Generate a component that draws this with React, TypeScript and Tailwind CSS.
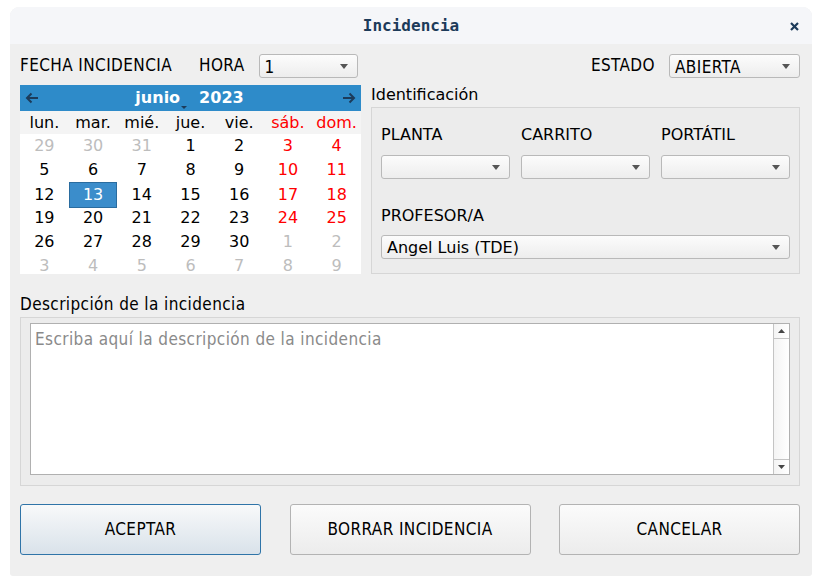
import type { ReactNode } from 'react';

const cond = "font-['DejaVu_Sans_Condensed','DejaVu_Sans',sans-serif] [font-stretch:condensed] text-[17px] tracking-[0.4px]";
const sans = "font-['DejaVu_Sans',sans-serif] text-[16px]";

function Arrow() {
  return (
    <svg width="8" height="5" viewBox="0 0 8 5" className="shrink-0">
      <path d="M0 0h8L4 5z" fill="#555" />
    </svg>
  );
}

function Select({ value, className = '', fontCls = sans }: { value?: string; className?: string; fontCls?: string }) {
  return (
    <div
      className={`flex items-center justify-between h-[24px] pl-[5px] pr-[9px] rounded-[3px] border border-[#b9b9b9] bg-linear-to-b from-[#fcfcfc] to-[#ededed] text-black ${fontCls} ${className}`}
    >
      <span className="leading-none pt-[2px]">{value}</span>
      <Arrow />
    </div>
  );
}

type Day = { n: number; c: 'gray' | 'black' | 'red' | 'sel' };

const weeks: Day[][] = [
  [29, 30, 31, 1, 2, 3, 4],
  [5, 6, 7, 8, 9, 10, 11],
  [12, 13, 14, 15, 16, 17, 18],
  [19, 20, 21, 22, 23, 24, 25],
  [26, 27, 28, 29, 30, 1, 2],
  [3, 4, 5, 6, 7, 8, 9],
].map((w, wi) =>
  w.map((n, di) => {
    const out = (wi === 0 && n > 20) || (wi >= 4 && n < 20);
    if (out) return { n, c: 'gray' as const };
    if (n === 13) return { n, c: 'sel' as const };
    if (di >= 5) return { n, c: 'red' as const };
    return { n, c: 'black' as const };
  })
);

function Calendar() {
  const names = ['lun.', 'mar.', 'mié.', 'jue.', 'vie.', 'sáb.', 'dom.'];
  return (
    <div className={`w-[341px] shrink-0 self-start mt-[1px] bg-white ${sans}`}>
      <div className="h-[26px] bg-[#2e8bc9] flex items-center justify-between px-[5px]">
        <svg width="14" height="12" viewBox="0 0 14 12">
          <path d="M13 6H2M6.5 1.5L2 6l4.5 4.5" stroke="#1c3b5a" strokeWidth="2" fill="none" />
        </svg>
        <div className="flex items-end gap-[19px] text-white font-bold text-[16px] mr-[2px]">
          <span className="relative">
            junio
            <span className="absolute right-[-7px] bottom-[1px] block w-0 h-0 border-l-[3px] border-r-[3px] border-t-[3px] border-l-transparent border-r-transparent border-t-[#1c3b5a]" />
          </span>
          <span>2023</span>
        </div>
        <svg width="14" height="12" viewBox="0 0 14 12">
          <path d="M1 6h11M7.5 1.5L12 6l-4.5 4.5" stroke="#1c3b5a" strokeWidth="2" fill="none" />
        </svg>
      </div>
      <div className="grid grid-cols-7 h-[23px] bg-[#f4f4f4] items-center">
        {names.map((d, i) => (
          <div key={d} className={`text-center ${i >= 5 ? 'text-[#ff0000]' : 'text-black'}`}>
            {d}
          </div>
        ))}
      </div>
      <div>
        {weeks.map((w, wi) => (
          <div key={wi} className={`grid grid-cols-7 items-center ${wi === 5 ? 'h-[20px]' : 'h-[24px]'}`}>
            {w.map((d, di) => (
              <div
                key={di}
                className={`text-center h-full flex items-center justify-center ${
                  d.c === 'gray'
                    ? 'text-[#bdbdbd]'
                    : d.c === 'red'
                    ? 'text-[#ff0000]'
                    : d.c === 'sel'
                    ? 'bg-[#3b8dcb] border border-[#2a6c9f] text-white'
                    : 'text-black'
                }`}
              >
                {d.n}
              </div>
            ))}
          </div>
        ))}
      </div>
    </div>
  );
}

function Button({ children, primary }: { children: ReactNode; primary?: boolean }) {
  return (
    <button
      className={`w-[241px] h-[51px] rounded-[3px] border text-black ${cond} ${
        primary
          ? 'border-[#2f74a8] bg-linear-to-b from-[#f8f9fa] to-[#d9e2ea]'
          : 'border-[#b3b3b3] bg-linear-to-b from-[#fbfbfb] to-[#ececec]'
      }`}
    >
      {children}
    </button>
  );
}

export default function App() {
  return (
    <div className="w-[822px] h-[584px] bg-white pt-[7px] px-[10px]">
      <div className="w-[802px] h-[569px] flex flex-col rounded-t-[9px] rounded-b-[3px] overflow-hidden bg-[#efefef]">
        <div className="h-[37px] shrink-0 bg-[#f5f6f9] flex items-center justify-center relative">
          <span className="font-['DejaVu_Sans_Mono',monospace] font-bold text-[16px] text-[#1d3b5a] pt-[1px]">
            Incidencia
          </span>
          <svg width="9" height="9" viewBox="0 0 9 9" className="absolute right-[13px] top-[15px]">
            <path d="M1 1l7 7M8 1L1 8" stroke="#1d3b5a" strokeWidth="2.2" />
          </svg>
        </div>

        <div className="flex-1 flex flex-col pl-[10px] pr-[12px]">
          <div className="flex items-center h-[40px] pt-[4px] text-black">
            <span className={cond}>FECHA INCIDENCIA</span>
            <span className={`ml-[27px] ${cond}`}>HORA</span>
            <Select value="1" className="ml-[14px] w-[99px]" fontCls={cond} />
            <span className={`ml-auto ${cond}`}>ESTADO</span>
            <Select value="ABIERTA" className="ml-[14px] w-[131px]" fontCls={cond} />
          </div>

          <div className="flex gap-[10px]">
            <Calendar />
            <div className={`flex-1 flex flex-col text-black ${sans}`}>
              <div className="h-[23px] leading-[21px]">Identificación</div>
              <div className="flex-1 border border-[#d6d6d6] bg-[#ececec] px-[9px] pt-[17px]">
                <div className="grid grid-cols-3 gap-x-[11px] leading-[19px]">
                  <span>PLANTA</span>
                  <span>CARRITO</span>
                  <span>PORTÁTIL</span>
                </div>
                <div className="grid grid-cols-3 gap-x-[11px] mt-[11px]">
                  <Select />
                  <Select />
                  <Select />
                </div>
                <div className="leading-[19px] mt-[27px]">PROFESOR/A</div>
                <Select value="Angel Luis (TDE)" className="mt-[10px]" />
              </div>
            </div>
          </div>

          <div className={`mt-[20px] leading-[20px] text-black ${cond}`}>Descripción de la incidencia</div>
          <div className="mt-[3px] h-[169px] border border-[#d6d6d6] bg-[#ececec] px-[9px] pt-[5px] pb-[10px]">
            <div className="h-full flex bg-white border border-[#b0b0b0]">
              <div className={`flex-1 px-[4px] pt-[3px] text-[#8a8a8a] ${cond}`}>
                Escriba aquí la descripción de la incidencia
              </div>
              <div className="w-[16px] border-l border-[#c4c4c4] flex flex-col bg-linear-to-r from-[#f4f4f4] to-[#ffffff]">
                <div className="h-[15px] border-b border-[#c4c4c4] flex items-center justify-center">
                  <svg width="7" height="4" viewBox="0 0 7 4">
                    <path d="M0 4h7L3.5 0z" fill="#444" />
                  </svg>
                </div>
                <div className="flex-1" />
                <div className="h-[15px] border-t border-[#c4c4c4] flex items-center justify-center">
                  <svg width="7" height="4" viewBox="0 0 7 4">
                    <path d="M0 0h7L3.5 4z" fill="#444" />
                  </svg>
                </div>
              </div>
            </div>
          </div>

          <div className="flex justify-between mt-[18px]">
            <Button primary>ACEPTAR</Button>
            <Button>BORRAR INCIDENCIA</Button>
            <Button>CANCELAR</Button>
          </div>
        </div>
      </div>
    </div>
  );
}
